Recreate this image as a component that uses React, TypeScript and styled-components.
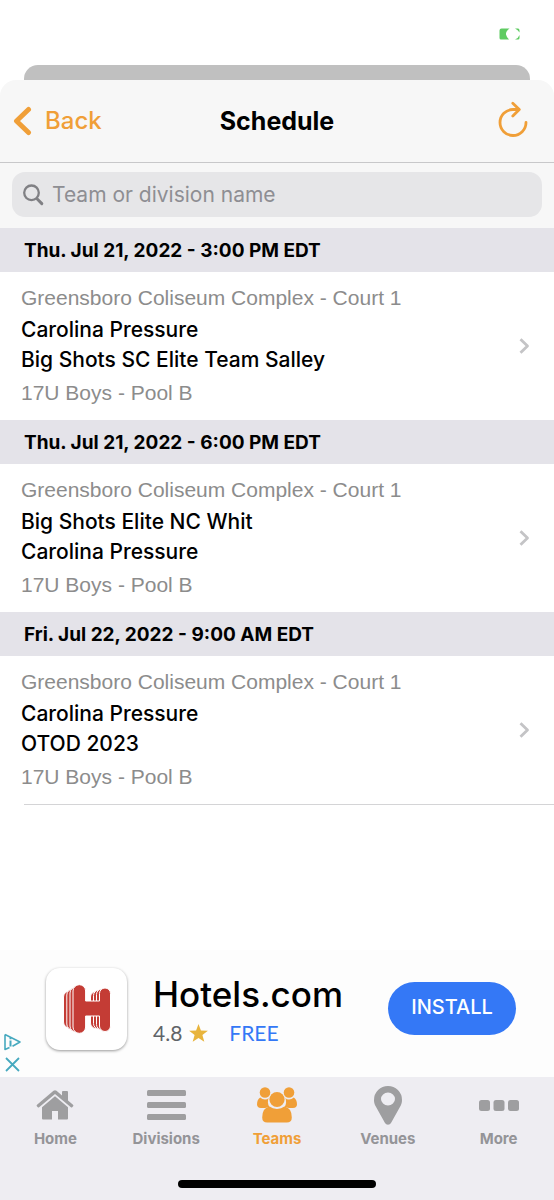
import React from 'react';
import styled, { createGlobalStyle } from 'styled-components';

const ORANGE = '#f09f38';
const GREY = '#8e8e93';

const GlobalStyle = createGlobalStyle`
  *, *::before, *::after { box-sizing: border-box; }
  body {
    margin: 0;
    background: #fff;
    color: #000;
    font-family: Inter, 'Liberation Sans', sans-serif;
  }
  button, input { font: inherit; }
`;

const Page = styled.div`
  display: flex;
  flex-direction: column;
  min-height: 100vh;
`;

const StatusBar = styled.div`
  display: flex;
  justify-content: flex-end;
  height: 65px;
  padding: 28px 33px 0 0;
`;

const CardBehind = styled.div`
  height: 15px;
  margin: 0 24px;
  border-radius: 14px 14px 0 0;
  background: #c0c0c0;
`;

const Sheet = styled.header`
  background: #f7f7f7;
  border-radius: 16px 16px 0 0;
`;

const NavBar = styled.div`
  display: grid;
  grid-template-columns: 1fr auto 1fr;
  align-items: center;
  height: 83px;
  padding: 0 26px 0 13px;
  border-bottom: 1px solid #c8c8ca;
`;

const NavButton = styled.button<{ $end?: boolean }>`
  display: flex;
  align-items: center;
  gap: 12px;
  justify-self: ${(p) => (p.$end ? 'end' : 'start')};
  padding: 0;
  border: 0;
  background: none;
  color: ${ORANGE};
  font-size: 24px;
  line-height: 32px;
  font-weight: 500;
  cursor: pointer;
`;

const Title = styled.h1`
  margin: 0;
  padding-left: 13px;
  font-size: 25px;
  line-height: 32px;
  font-weight: 700;
`;

const SearchArea = styled.div`
  padding: 9px 12px 11px;
`;

const SearchBox = styled.label`
  display: flex;
  align-items: center;
  gap: 8px;
  height: 45px;
  padding: 0 11px;
  border-radius: 13px;
  background: #e6e6e8;
`;

const SearchInput = styled.input`
  flex: 1;
  min-width: 0;
  padding: 0;
  border: 0;
  outline: 0;
  background: none;
  font-size: 21px;
  &::placeholder { color: ${GREY}; opacity: 1; }
`;

const Schedule = styled.main`
  flex: 1;
`;

const SlotHeading = styled.h2`
  margin: 0;
  padding: 2px 24px 0;
  background: #e4e3e9;
  font-size: 19px;
  line-height: 42px;
  font-weight: 700;
`;

const GameLink = styled.a`
  display: flex;
  align-items: center;
  justify-content: space-between;
  padding: 10px 24px 11px 21px;
  color: inherit;
  text-decoration: none;
`;

const Detail = styled.div`
  color: #8c8c8c;
  font-family: 'Liberation Sans', sans-serif;
  font-size: 21px;
  line-height: 32px;
`;

const Teams = styled.div`
  padding: 1px 0 2px;
  font-size: 21px;
  line-height: 30px;
  font-weight: 500;
`;

const ListEnd = styled.hr`
  margin: 0 0 0 24px;
  border: 0;
  border-top: 1px solid #d4d4d6;
`;

const Ad = styled.aside`
  position: relative;
  display: flex;
  align-items: center;
  height: 127px;
  padding: 0 38px 10px 46px;
  background: #fdfdfd;
`;

const AppIcon = styled.div`
  display: grid;
  place-items: center;
  width: 81px;
  height: 82px;
  border-radius: 14px;
  background: #fff;
  box-shadow: 0 1px 3px rgba(0, 0, 0, 0.4);
`;

const AdText = styled.div`
  flex: 1;
  padding: 4px 0 0 26px;
`;

const AdName = styled.div`
  font-size: 35px;
  line-height: 44px;
  font-weight: 500;
`;

const AdMeta = styled.div`
  display: flex;
  align-items: center;
  gap: 7px;
  color: #5f6368;
  font-family: Lato, sans-serif;
  font-size: 21px;
  line-height: 34px;
`;

const Price = styled.span`
  padding-left: 14px;
  color: #3478f6;
`;

const InstallButton = styled.button`
  width: 128px;
  height: 53px;
  padding: 0 0 3px;
  border: 0;
  border-radius: 27px;
  background: #3478f6;
  color: #fff;
  font-size: 20px;
  font-weight: 500;
  cursor: pointer;
`;

const AdControls = styled.div`
  position: absolute;
  left: 3px;
  bottom: 3px;
  display: grid;
  gap: 4px;
`;

const AdControl = styled.button`
  display: grid;
  place-items: center;
  width: 19px;
  height: 19px;
  padding: 0;
  border: 0;
  background: none;
  cursor: pointer;
`;

const TabBar = styled.nav`
  display: grid;
  grid-template-columns: repeat(5, 1fr);
  padding: 7px 0 0;
  background: #eeedf2;
`;

const Tab = styled.a<{ $active?: boolean }>`
  display: flex;
  flex-direction: column;
  align-items: center;
  gap: 3px;
  color: ${(p) => (p.$active ? ORANGE : '#949498')};
  font-size: 15px;
  line-height: 20px;
  font-weight: 700;
  text-decoration: none;
`;

const TabIcon = styled.span<{ $active?: boolean }>`
  display: grid;
  place-items: center;
  height: 42px;
  color: ${(p) => (p.$active ? ORANGE : '#9e9ea0')};
`;

const HomeIndicator = styled.div`
  padding: 31px 0 12px;
  background: #eeedf2;
  &::before {
    content: '';
    display: block;
    width: 198px;
    height: 8px;
    margin: 0 auto;
    border-radius: 4px;
    background: #000;
  }
`;

const games = [
  { time: 'Thu. Jul 21, 2022 - 3:00 PM EDT', home: 'Carolina Pressure', away: 'Big Shots SC Elite Team Salley' },
  { time: 'Thu. Jul 21, 2022 - 6:00 PM EDT', home: 'Big Shots Elite NC Whit', away: 'Carolina Pressure' },
  { time: 'Fri. Jul 22, 2022 - 9:00 AM EDT', home: 'Carolina Pressure', away: 'OTOD 2023' },
];

const HomeIcon = () => (
  <svg width="38" height="30" viewBox="0 0 38 30" fill="currentColor">
    <path d="M19 6.200 32 17.200V28.500a1 1 0 0 1-1 1H22V21h-6v8.500H7a1 1 0 0 1-1-1V17.200Z" />
    <path d="M17.500.8a2.400 2.400 0 0 1 3 0L26 5.400V2a1 1 0 0 1 1-1h4a1 1 0 0 1 1 1v8.500l5 4.200q.8.700.1 1.500l-.9 1q-.6.600-1.300 0L19 3.900 3.100 17.200q-.7.600-1.300 0l-.9-1q-.7-.8.100-1.500Z" />
  </svg>
);

const DivisionsIcon = () => (
  <svg width="39" height="31" viewBox="0 0 39 31" fill="currentColor">
    <rect y="0" width="39" height="6" rx="1.500" />
    <rect y="12" width="39" height="6" rx="1.500" />
    <rect y="24" width="39" height="6" rx="1.500" />
  </svg>
);

const TeamsIcon = () => (
  <svg width="40" height="36" viewBox="0 0 40 36" fill="currentColor">
    <circle cx="8" cy="5.500" r="5.300" />
    <circle cx="32" cy="5.500" r="5.300" />
    <path d="M3.200 10.500Q5.300 12.500 8 12.500t3.600-1.500q-.9 2.500-.7 4.500.2 2.400 1.500 4.400-2.600.3-4.300 1.200H4Q0 20.500 0 17.500 0 12.500 3.200 10.500Z" />
    <path d="M36.800 10.500Q34.700 12.500 32 12.500t-3.600-1.500q.9 2.500.7 4.500-.2 2.400-1.500 4.400 2.600.3 4.300 1.200H36q4-.6 4-3.600 0-5-3.200-7Z" />
    <circle cx="20" cy="12.500" r="7.600" />
    <path d="M12.600 19.600Q15.500 22 20 22t7.400-2.400Q34.800 21 34.800 30.500q0 5-5 5H10.200q-5 0-5-5 0-9.500 7.400-10.900Z" />
  </svg>
);

const VenuesIcon = () => (
  <svg width="28" height="39" viewBox="0 0 28 39" fill="currentColor">
    <path fillRule="evenodd" d="M14 0a14 14 0 0 1 14 14c0 2-.4 3.800-1.100 5.200L17 37a3.400 3.400 0 0 1-6 0L1.100 19.200C.4 17.800 0 16 0 14A14 14 0 0 1 14 0Zm0 6.500a7 6.500 0 1 0 0 13 7 6.500 0 0 0 0-13Z" />
  </svg>
);

const MoreIcon = () => (
  <svg width="40" height="11" viewBox="0 0 40 11" fill="currentColor">
    <rect x="0" width="11" height="11" rx="2.500" />
    <rect x="14.500" width="11" height="11" rx="2.500" />
    <rect x="29" width="11" height="11" rx="2.500" />
  </svg>
);

const tabs = [
  { label: 'Home', Icon: HomeIcon },
  { label: 'Divisions', Icon: DivisionsIcon },
  { label: 'Teams', Icon: TeamsIcon, active: true },
  { label: 'Venues', Icon: VenuesIcon },
  { label: 'More', Icon: MoreIcon },
];

export default function App() {
  return (
    <Page>
      <GlobalStyle />
      <StatusBar>
        <svg width="22" height="12" viewBox="0 0 22 12" fill="#5fcb62" role="img" aria-label="Battery">
          <path d="M2.500.500H10.500Q6.500 3.500 7 6.500 7.500 9 10 11.500H2Q.500 11.500.500 10V2.500Q.500.500 2.500.500Z" />
          <path d="M16 .500h3Q20.500.500 20.500 2.500V4.500Q19 2 16 .500ZM20.500 7v3q0 1.500-1.500 1.500H16Q19.500 10 20.500 7Z" />
        </svg>
      </StatusBar>
      <CardBehind />
      <Sheet>
        <NavBar>
          <NavButton type="button">
            <svg width="20" height="30" viewBox="0 0 20 30" fill="none" stroke="currentColor" strokeWidth="5" strokeLinecap="round" strokeLinejoin="round">
              <path d="M15.500 3.500 3.500 15l12 11.500" />
            </svg>
            Back
          </NavButton>
          <Title>Schedule</Title>
          <NavButton type="button" $end aria-label="Refresh">
            <svg width="30" height="40" viewBox="0 0 30 40" fill="none" stroke="currentColor" strokeWidth="2.800" strokeLinecap="round" strokeLinejoin="round">
              <path d="M28 21.500a13 13 0 1 1-13-13h6M14.800 2.200l6.500 6.300-6.500 6.500" />
            </svg>
          </NavButton>
        </NavBar>
        <SearchArea>
          <SearchBox>
            <svg width="21" height="22" viewBox="0 0 21 22" fill="none" stroke="#808084" strokeLinecap="round" aria-hidden="true">
              <circle cx="8.500" cy="8.800" r="7.300" strokeWidth="2.300" />
              <path d="m14 14.800 4.800 4.800" strokeWidth="3" />
            </svg>
            <SearchInput type="search" placeholder="Team or division name" aria-label="Team or division name" />
          </SearchBox>
        </SearchArea>
      </Sheet>
      <Schedule>
        {games.map((g) => (
          <section key={g.time}>
            <SlotHeading>{g.time}</SlotHeading>
            <GameLink href="#game">
              <div>
                <Detail>Greensboro Coliseum Complex - Court 1</Detail>
                <Teams>
                  <div>{g.home}</div>
                  <div>{g.away}</div>
                </Teams>
                <Detail>17U Boys - Pool B</Detail>
              </div>
              <svg width="11" height="16" viewBox="0 0 11 16" fill="none" stroke="#c4c4c6" strokeWidth="2.800" strokeLinejoin="round" aria-hidden="true">
                <path d="m1.500 1.200 7 6.800-7 6.800" />
              </svg>
            </GameLink>
          </section>
        ))}
        <ListEnd />
      </Schedule>
      <Ad aria-label="Advertisement">
        <AppIcon>
          <svg width="48" height="50" viewBox="0 0 48 50" role="img" aria-label="Hotels.com logo">
            <g fill="#c43c35" stroke="#fff" strokeWidth="1">
              <rect x="0.500" y="7" width="12" height="37" rx="6" />
              <rect x="3.800" y="5" width="12" height="41" rx="6" />
              <rect x="7" y="3" width="12" height="45" rx="6" />
              <rect x="27.500" y="7.500" width="11" height="37" rx="5.500" />
              <rect x="30.500" y="6" width="11" height="39" rx="5.500" />
              <rect x="33.500" y="5" width="11" height="41" rx="5.500" />
              <path d="M10 7a6.300 6.300 0 0 1 12.600 0V17H36.500V9.500a5.500 5.500 0 0 1 11 0V42a5.500 5.500 0 0 1-11 0V32H22.600V43A6.300 6.300 0 0 1 10 43Z" />
            </g>
          </svg>
        </AppIcon>
        <AdText>
          <AdName>Hotels.com</AdName>
          <AdMeta>
            4.8
            <svg width="19" height="18" viewBox="0 0 24 23" fill="#e8b43c" aria-hidden="true">
              <path d="m12 0 3.100 8.200 8.900.400-7 5.500 2.400 8.500L12 17.800 4.600 22.600 7 14.100 0 8.600l8.900-.400Z" />
            </svg>
            <Price>FREE</Price>
          </AdMeta>
        </AdText>
        <InstallButton type="button">INSTALL</InstallButton>
        <AdControls>
          <AdControl type="button" aria-label="Ad information">
            <svg width="19" height="18" viewBox="0 0 19 18" fill="none" stroke="#46a9bf" strokeWidth="1.600" strokeLinejoin="round">
              <path d="M2 1.500v15l4.500-2M2 1.500 17 9l-7.500 4.200" />
              <path d="M7.500 7.500v6M7.500 4.500v1.800" strokeWidth="2" />
            </svg>
          </AdControl>
          <AdControl type="button" aria-label="Close ad">
            <svg width="15" height="15" viewBox="0 0 15 15" fill="none" stroke="#46a9bf" strokeWidth="1.800">
              <path d="m1 1 13 13M14 1 1 14" />
            </svg>
          </AdControl>
        </AdControls>
      </Ad>
      <TabBar>
        {tabs.map(({ label, Icon, active }) => (
          <Tab key={label} href={'#' + label.toLowerCase()} $active={active}>
            <TabIcon $active={active}>
              <Icon />
            </TabIcon>
            {label}
          </Tab>
        ))}
      </TabBar>
      <HomeIndicator />
    </Page>
  );
}
